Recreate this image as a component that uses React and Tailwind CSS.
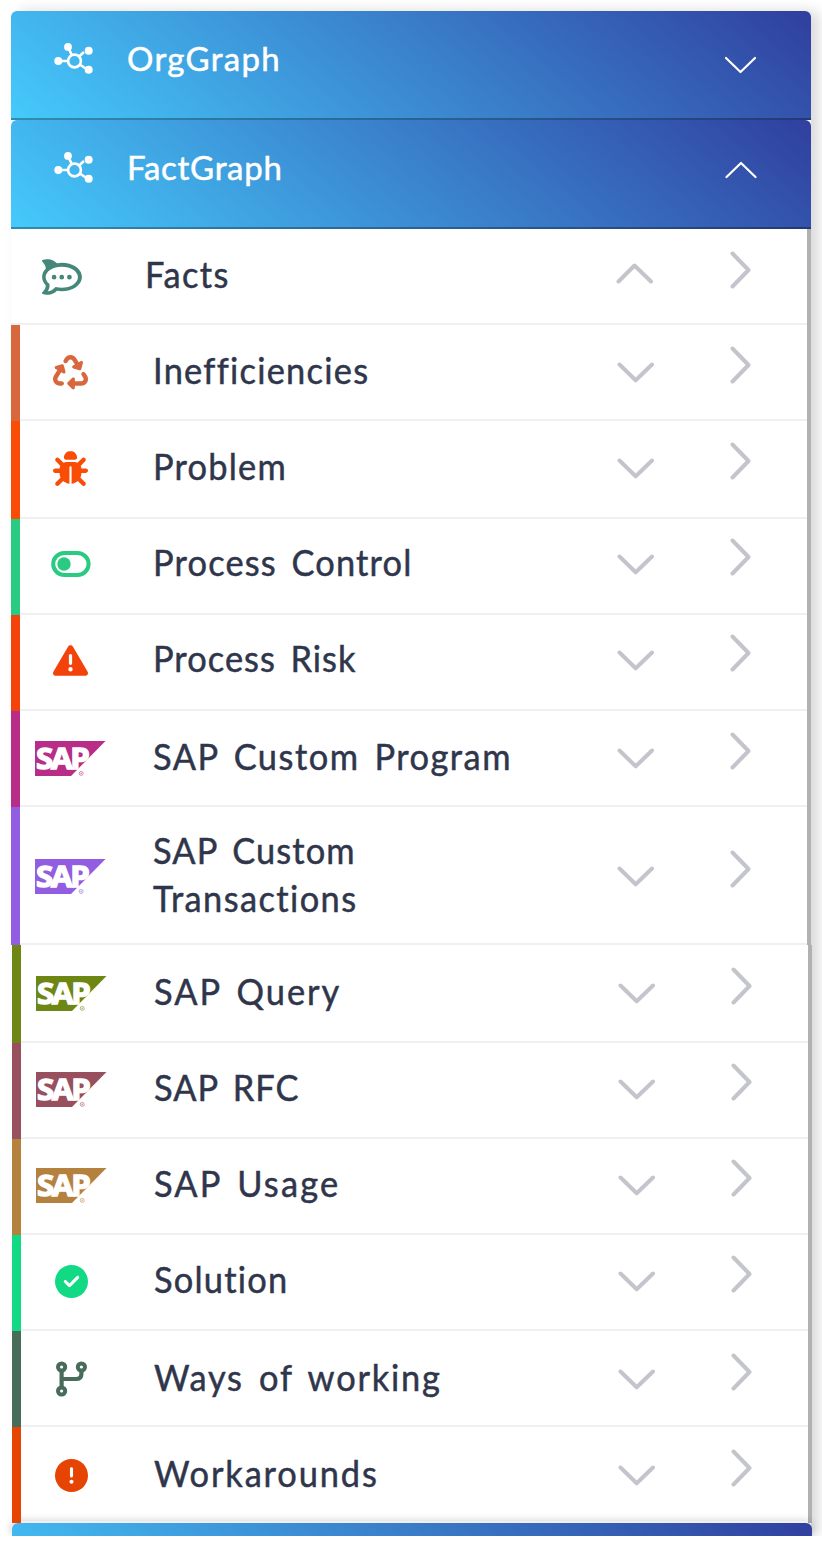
import React from "react";
import {
  FaRocketchat,
  FaRecycle,
  FaBug,
  FaTriangleExclamation,
  FaCircleCheck,
  FaCircleExclamation,
} from "react-icons/fa6";

function HubIcon() {
  return (
    <svg width="40" height="32" viewBox="0 0 40 32" fill="none" stroke="white" strokeWidth="2.6">
      <path d="M4 18H13M14 4L18 12.5M24.5 14L30 9M25 21L34 27" />
      <circle cx="20.5" cy="18" r="6.4" strokeWidth="2.6" />
      <g fill="white" stroke="none">
        <circle cx="4.3" cy="18" r="4" />
        <circle cx="14" cy="3.9" r="3.9" />
        <circle cx="34.7" cy="7.8" r="4" />
        <circle cx="34.7" cy="26.7" r="4" />
      </g>
    </svg>
  );
}

function Toggle() {
  return (
    <svg width="40" height="26" viewBox="0 0 40 26" fill="none">
      <rect x="2.2" y="2" width="35.4" height="22" rx="11" stroke="currentColor" strokeWidth="4" />
      <circle cx="13" cy="13" r="6.7" fill="currentColor" />
    </svg>
  );
}

function Branch() {
  return (
    <svg width="32" height="36" viewBox="0 0 32 36" fill="none" stroke="currentColor" strokeWidth="4">
      <circle cx="5.6" cy="6" r="3.6" />
      <circle cx="5.6" cy="30" r="3.6" />
      <circle cx="25.4" cy="6" r="3.6" />
      <path d="M5.6 9.5V26.5M5.6 18H20Q25.4 18 25.4 13V9.5" strokeWidth="4.2" />
    </svg>
  );
}

function Sap() {
  return (
    <svg width="71" height="35" viewBox="0 0 71 35" className="overflow-visible">
      <polygon points="0,0 70.5,0 36,35 0,35" fill="currentColor" />
      <text
        x="1"
        y="27.6"
        textLength="51.5"
        lengthAdjust="spacingAndGlyphs"
        className="font-['Open_Sans',sans-serif] text-[28.5px] font-bold tracking-[-2px]"
        fill="white"
        stroke="white"
        strokeWidth="1.4"
      >
        SAP
      </text>
      <circle cx="46.2" cy="32.4" r="2" fill="none" stroke="currentColor" strokeWidth="0.9" opacity="0.6" />
      <circle cx="46.2" cy="32.4" r="0.9" fill="currentColor" opacity="0.5" />
    </svg>
  );
}

function Chevron({ up }) {
  return (
    <svg width="38" height="21" viewBox="0 0 38 21" fill="none" stroke="#c4c5cc" strokeWidth="4" strokeLinecap="round" strokeLinejoin="round">
      <path d={up ? "M2.5 18.5L18.5 2.5L35 18.5" : "M2.5 2.5L18.7 18.3L35 2.5"} />
    </svg>
  );
}

function Header({ label, open, tracking }) {
  return (
    <div className="flex h-[109px] rounded-t-[6px] border-b-2 border-black/30 bg-[linear-gradient(40deg,#45cafc,#303f9f)] bg-origin-border">
      <div className="w-[116px] pt-8 pl-[43px]">
        <HubIcon />
      </div>
      <div className={`grow pt-[25px] text-[33px] leading-[44px] text-white [-webkit-text-stroke:0.5px_white] ${tracking}`}>
        {label}
      </div>
      <div className={open ? "w-[86px] pt-[41px]" : "w-[87px] pt-[45px]"}>
        <svg width="32" height="18" viewBox="0 0 32 18" fill="none" stroke="white" strokeWidth="2.2" strokeLinecap="round" strokeLinejoin="round">
          <path d={open ? "M1.5 16L16 2L30.5 16" : "M2 2L16.5 16L31 2"} />
        </svg>
      </div>
    </div>
  );
}

function Row({ lines, icon, color, size = "h-24", content = "h-[96px]", first }) {
  return (
    <div className={`flex ${size}`}>
      {!first && <div className={`w-[9px] shrink-0 ${color}`} />}
      <div className="flex grow border-b-2 border-[#f0f0f2]">
        <div className={`flex grow items-center ${content}`}>
          <div className={`flex w-[101px] shrink-0 items-center justify-center bg-transparent! ${color}`}>{icon}</div>
          <div
            className={`shrink-0 origin-left scale-x-[0.93] text-[37px] leading-[48px] whitespace-nowrap text-[#2f364b] [-webkit-text-stroke:0.5px_#2f364b] [word-spacing:5px] ${first ? "ml-[33px] w-[471px] pb-[6px]" : "ml-[32px] w-[464px] pb-1"}`}
          >
            {lines.map(([text, tracking]) => (
              <div key={text} className={tracking}>
                {text}
              </div>
            ))}
          </div>
          <div className={`shrink-0 ${first ? "w-[114px] pb-[7px]" : "w-[113px] pt-px"}`}>
            <Chevron up={first} />
          </div>
          <svg className="-mt-[14px] shrink-0" width="21" height="38" viewBox="0 0 21 38" fill="none" stroke="#c4c5cc" strokeWidth="4" strokeLinecap="round" strokeLinejoin="round">
            <path d="M2.5 2.5L18.5 19L2.5 35.5" />
          </svg>
        </div>
      </div>
    </div>
  );
}

const upper = [
  { lines: [["Inefficiencies", "tracking-[1.35px]"]], icon: <FaRecycle size={35} />, color: "bg-[#d8673d] text-[#d8673d]", content: "-mt-px h-[96px]" },
  { lines: [["Problem", "tracking-[1.3px]"]], icon: <FaBug size={35} />, color: "bg-[#f94c06] text-[#f94c06]", size: "h-[98px]", content: "-mt-px h-[96px]" },
  { lines: [["Process Control", "tracking-[1.25px]"]], icon: <Toggle />, color: "bg-[#28cb81] text-[#28cb81]", content: "-mt-px h-[92px]" },
  { lines: [["Process Risk", "tracking-[1.1px]"]], icon: <FaTriangleExclamation size={35} />, color: "bg-[#f3420a] text-[#f3420a]", content: "-mt-px h-[92px]" },
  { lines: [["SAP Custom Program", "tracking-[1.6px]"]], icon: <Sap />, color: "bg-[#b72d88] text-[#b72d88]", content: "-mt-px h-[96px]" },
  {
    lines: [
      ["SAP Custom", "tracking-[1.2px]"],
      ["Transactions", "tracking-[1.5px]"],
    ],
    icon: <Sap />,
    color: "bg-[#925de0] text-[#925de0]",
    size: "h-[138px]",
    content: "-mt-px h-[140px]",
  },
];

const lower = [
  { lines: [["SAP Query", "tracking-[2.1px]"]], icon: <Sap />, color: "bg-[#6d8614] text-[#6d8614]", size: "h-[98px]" },
  { lines: [["SAP RFC", "tracking-[1.1px]"]], icon: <Sap />, color: "bg-[#98505f] text-[#98505f]", content: "h-[92px]" },
  { lines: [["SAP Usage", "tracking-[2.3px]"]], icon: <Sap />, color: "bg-[#b4813f] text-[#b4813f]", content: "h-[92px]" },
  { lines: [["Solution", "tracking-[1.3px]"]], icon: <FaCircleCheck size={33} />, color: "bg-[#12d983] text-[#12d983]", content: "h-[92px]" },
  { lines: [["Ways of working", "tracking-[1.9px]"]], icon: <Branch />, color: "bg-[#486c5a] text-[#486c5a]" },
  { lines: [["Workarounds", "tracking-[2px]"]], icon: <FaCircleExclamation size={33} />, color: "bg-[#e64402] text-[#e64402]" },
];

export default function App() {
  return (
    <div className="h-[1563px] w-[822px] overflow-hidden bg-white font-['Lato',sans-serif]">
      <div className="h-[1536px] overflow-hidden pt-[11px] pl-[11px]">
        <div className="w-[800px] rounded-t-[6px] bg-white shadow-[8px_0_14px_rgba(0,0,0,0.15)]">
          <Header label="OrgGraph" tracking="tracking-[1.3px]" />
          <Header label="FactGraph" open tracking="tracking-[0.7px]" />
          <div className="border-r-4 border-[#b1b1b1]">
            <Row first lines={[["Facts", "tracking-[1.5px]"]]} icon={<FaRocketchat size={40} />} color="text-[#45877a]" />
            {upper.map((row) => (
              <Row key={row.lines[0][0]} {...row} />
            ))}
          </div>
          <div className="-mr-px ml-px border-r-4 border-[#b1b1b1]">
            {lower.map((row) => (
              <Row key={row.lines[0][0]} {...row} />
            ))}
          </div>
          <div className="ml-px h-[13px] w-[800px] rounded-t-[6px] bg-[linear-gradient(40deg,#45cafc,#303f9f)] bg-[length:100%_109px] shadow-[0_-2px_8px_rgba(0,0,0,0.2)]" />
        </div>
      </div>
    </div>
  );
}
